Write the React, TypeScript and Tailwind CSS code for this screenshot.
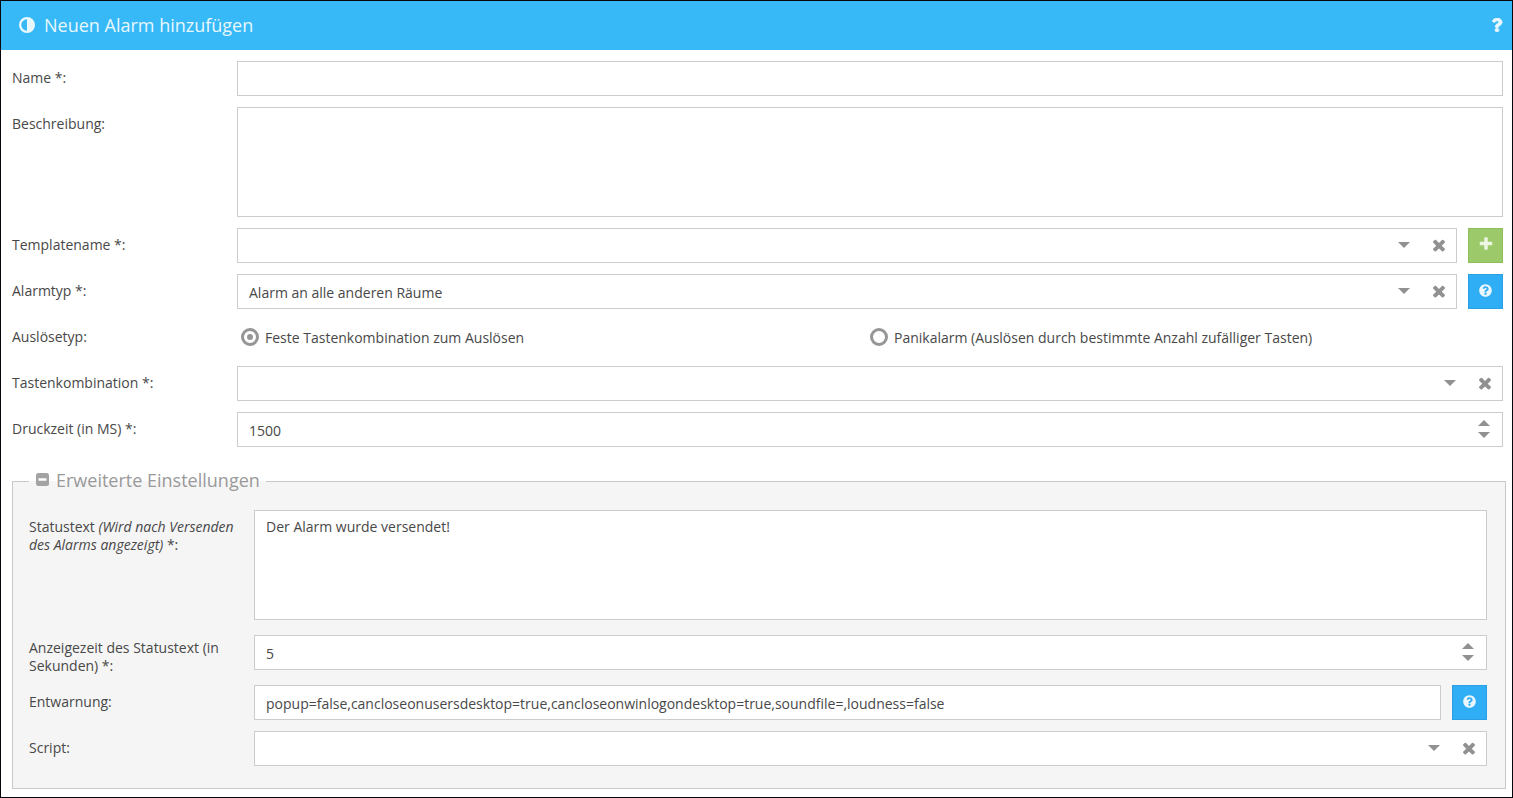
import { useState } from "react";
import type { ReactNode } from "react";
import { FaQuestion, FaQuestionCircle } from "react-icons/fa";

const boxClass =
  "flex h-[35px] min-w-0 flex-1 items-center border border-[#cccccc] bg-white";
const controlClass =
  "h-full min-w-0 flex-1 appearance-none bg-transparent pt-[2px] pl-[11px] outline-none";

function AdjustIcon() {
  return (
    <svg viewBox="0 0 16 16" className="h-4 w-4 fill-current">
      <path
        fillRule="evenodd"
        d="M8 0a8 8 0 1 1 0 16A8 8 0 0 1 8 0zm0 2.300a5.700 5.700 0 0 0 0 11.400z"
      />
    </svg>
  );
}

function MinusSquareIcon() {
  return (
    <svg viewBox="0 0 13 13" className="h-[13px] w-[13px]">
      <rect width="13" height="13" rx="2.500" fill="#a3a3a3" />
      <rect x="2.500" y="5.300" width="8" height="2.400" rx=".5" fill="#fff" />
    </svg>
  );
}

function TimesIcon() {
  return (
    <svg viewBox="0 0 1792 1792" className="h-[18px] w-[18px] fill-[#919191]">
      <path d="M1490 1322q0 40-28 68l-136 136q-28 28-68 28t-68-28l-294-294-294 294q-28 28-68 28t-68-28l-136-136q-28-28-28-68t28-68l294-294-294-294q-28-28-28-68t28-68l136-136q28-28 68-28t68 28l294 294 294-294q28-28 68-28t68 28l136 136q28 28 28 68t-28 68l-294 294 294 294q28 28 28 68z" />
    </svg>
  );
}

function PlusIcon() {
  return (
    <svg viewBox="0 0 1792 1792" className="h-4 w-4 fill-[#edf6e3]">
      <path d="M1600 736v192q0 40-28 68t-68 28h-416v416q0 40-28 68t-68 28h-192q-40 0-68-28t-28-68v-416h-416q-40 0-68-28t-28-68v-192q0-40 28-68t68-28h416v-416q0-40 28-68t68-28h192q40 0 68 28t28 68v416h416q40 0 68 28t28 68z" />
    </svg>
  );
}

function Caret({ up = false }: { up?: boolean }) {
  return (
    <svg viewBox="0 0 12 6" className="h-[6px] w-3 fill-[#919191]">
      <path d={up ? "M0 6 6 0l6 6z" : "M0 0h12L6 6z"} />
    </svg>
  );
}

type RowProps = {
  id?: string;
  label: ReactNode;
  children: ReactNode;
};

function Row({ id, label, children }: RowProps) {
  return (
    <div className="flex items-center">
      <label
        htmlFor={id}
        className="w-[225px] shrink-0 self-start pt-2 pr-3 leading-[18px]"
      >
        {label}
      </label>
      <div className="flex min-w-0 flex-1 gap-[11px] pb-px">{children}</div>
    </div>
  );
}

function TextArea({ id, text }: { id: string; text?: string }) {
  return (
    <textarea
      id={id}
      defaultValue={text}
      className="h-[110px] min-w-0 flex-1 resize-none border border-[#cccccc] bg-white px-[11px] py-[7px] leading-[18px] outline-none"
    />
  );
}

function SelectBox({ id, options = [] }: { id: string; options?: string[] }) {
  const [value, setValue] = useState(options[0] ?? "");

  return (
    <div className={boxClass}>
      <select
        id={id}
        value={value}
        onChange={(e) => setValue(e.target.value)}
        className={controlClass}
      >
        <option value=""></option>
        {options.map((option) => (
          <option key={option}>{option}</option>
        ))}
      </select>
      <span className="pointer-events-none flex w-[35px] justify-center pb-[2px]">
        <Caret />
      </span>
      <button
        type="button"
        aria-label="Auswahl löschen"
        onClick={() => setValue("")}
        className="flex w-[35px] justify-center pb-[2px]"
      >
        <TimesIcon />
      </button>
    </div>
  );
}

function NumberBox({ id, initial }: { id: string; initial: number }) {
  const [value, setValue] = useState(initial);

  return (
    <div className={boxClass}>
      <input
        id={id}
        type="number"
        value={value}
        onChange={(e) => setValue(Number(e.target.value))}
        className={`${controlClass} [appearance:textfield]`}
      />
      <div className="flex w-9 flex-col items-center gap-[6px] pb-[2px]">
        <button
          type="button"
          aria-label="Erhöhen"
          onClick={() => setValue(value + 1)}
        >
          <Caret up />
        </button>
        <button
          type="button"
          aria-label="Verringern"
          onClick={() => setValue(value - 1)}
        >
          <Caret />
        </button>
      </div>
    </div>
  );
}

function HelpButton() {
  return (
    <button
      type="button"
      aria-label="Hilfe"
      className="flex h-[35px] w-[35px] shrink-0 items-center justify-center border border-[#2a9fe4] bg-[#2fadf5] pb-[2px] text-[13px] text-[#eaf6fe]"
    >
      <FaQuestionCircle />
    </button>
  );
}

function Radio({ label, checked }: { label: string; checked?: boolean }) {
  return (
    <label className="flex items-center gap-[6px]">
      <input
        type="radio"
        name="trigger"
        defaultChecked={checked}
        className="flex h-[18px] w-[18px] shrink-0 appearance-none items-center justify-center rounded-full border-[3px] border-[#969696] bg-white before:h-[6px] before:w-[6px] before:rounded-full checked:before:bg-[#969696]"
      />
      <span className="pt-[2px]">{label}</span>
    </label>
  );
}

export default function App() {
  return (
    <div className="min-h-screen border border-[#05070d] bg-white pb-[7px] font-['Open_Sans',sans-serif] text-sm text-[#484848]">
      <header className="flex h-[49px] items-center gap-[9px] bg-[#36b9f6] pr-[9px] pb-[2px] pl-[18px] text-[#e8f7fe]">
        <AdjustIcon />
        <h1 className="flex-1 text-lg leading-6">Neuen Alarm hinzufügen</h1>
        <button type="button" aria-label="Hilfe">
          <FaQuestion className="h-[14px] w-3 stroke-current stroke-[36]" />
        </button>
      </header>

      <form>
        <div className="flex flex-col gap-[10px] pt-[11px] pr-[9px] pl-[11px]">
          <Row id="name" label="Name *:">
            <div className={boxClass}>
              <input id="name" type="text" className={controlClass} />
            </div>
          </Row>
          <Row id="description" label="Beschreibung:">
            <TextArea id="description" />
          </Row>
          <Row id="template" label="Templatename *:">
            <SelectBox id="template" />
            <button
              type="button"
              aria-label="Template hinzufügen"
              className="flex h-[35px] w-[35px] shrink-0 items-center justify-center border border-[#8fbf59] bg-[#9cca6b] pb-[3px]"
            >
              <PlusIcon />
            </button>
          </Row>
          <Row id="type" label="Alarmtyp *:">
            <SelectBox id="type" options={["Alarm an alle anderen Räume"]} />
            <HelpButton />
          </Row>
          <Row label="Auslösetyp:">
            <div className="grid h-[35px] flex-1 grid-cols-2 px-1 pb-[2px]">
              <Radio label="Feste Tastenkombination zum Auslösen" checked />
              <Radio label="Panikalarm (Auslösen durch bestimmte Anzahl zufälliger Tasten)" />
            </div>
          </Row>
          <Row id="shortcut" label="Tastenkombination *:">
            <SelectBox id="shortcut" />
          </Row>
          <Row id="press-time" label="Druckzeit (in MS) *:">
            <NumberBox id="press-time" initial={1500} />
          </Row>
        </div>

        <fieldset className="mt-5 mr-[6px] ml-[11px] border border-[#c8c8c8] bg-[#f5f5f5] pr-[18px] pb-[21px] pl-4">
          <legend className="px-[6px] text-lg text-[#999999]">
            <button
              type="button"
              className="flex items-center gap-[7px] pb-[2px] pl-px leading-[25px]"
            >
              <span className="pb-[3px]">
                <MinusSquareIcon />
              </span>
              Erweiterte Einstellungen
            </button>
          </legend>
          <div className="flex flex-col gap-[10px] pt-[15px]">
            <Row
              id="status"
              label={
                <>
                  Statustext <em>(Wird nach Versenden des Alarms angezeigt)</em>{" "}
                  *:
                </>
              }
            >
              <TextArea id="status" text="Der Alarm wurde versendet!" />
            </Row>
            <Row
              id="status-time"
              label="Anzeigezeit des Statustext (in Sekunden) *:"
            >
              <NumberBox id="status-time" initial={5} />
            </Row>
            <Row id="all-clear" label="Entwarnung:">
              <div className={boxClass}>
                <input
                  id="all-clear"
                  type="text"
                  defaultValue="popup=false,cancloseonusersdesktop=true,cancloseonwinlogondesktop=true,soundfile=,loudness=false"
                  className={controlClass}
                />
              </div>
              <HelpButton />
            </Row>
            <Row id="script" label="Script:">
              <SelectBox id="script" />
            </Row>
          </div>
        </fieldset>
      </form>
    </div>
  );
}
